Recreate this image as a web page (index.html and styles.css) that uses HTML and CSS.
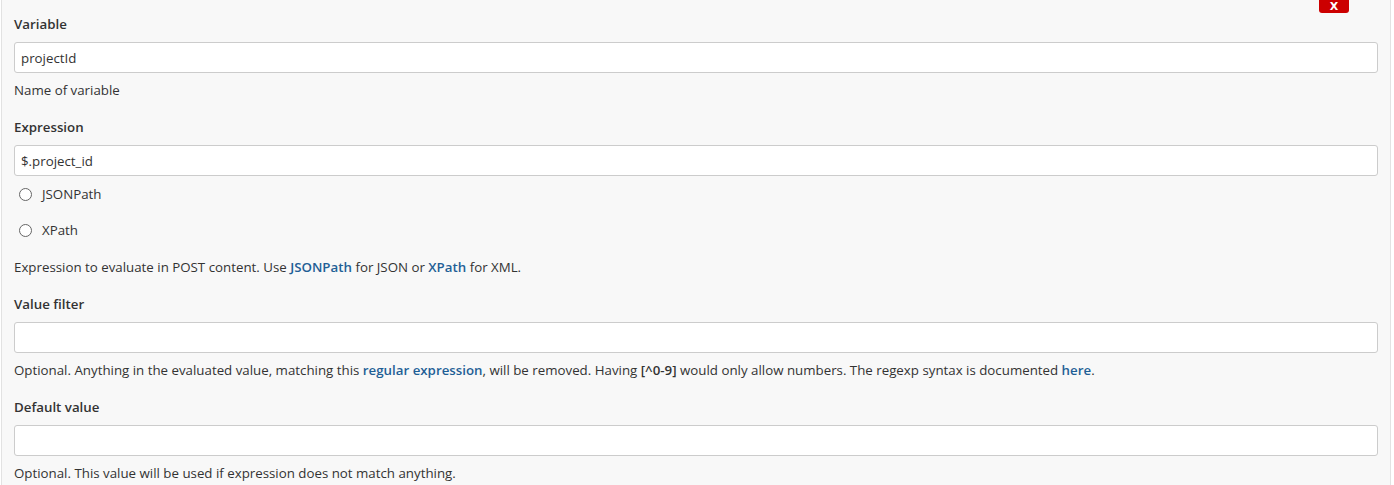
FILE: index.html
```html
<!DOCTYPE html>
<html>
<head>
<meta charset="utf-8">
<link rel="stylesheet" href="styles.css">
</head>
<body>
<div class="panel">
  <div class="toolbar"><button class="close">X</button></div>
  <div class="field">
    <div class="label">Variable</div>
    <input class="text" type="text" value="projectId">
    <div class="help">Name of variable</div>
  </div>
  <div class="field">
    <div class="label">Expression</div>
    <input class="text" type="text" value="$.project_id">
    <label class="radio"><span class="dot"></span>JSONPath</label>
    <label class="radio"><span class="dot"></span>XPath</label>
    <div class="help">Expression to evaluate in POST content. Use <a href="#">JSONPath</a> for JSON or <a href="#">XPath</a> for XML.</div>
  </div>
  <div class="field">
    <div class="label">Value filter</div>
    <input class="text" type="text" value="">
    <div class="help">Optional. Anything in the evaluated value, matching this <a href="#">regular expression</a>, will be removed. Having <b>[^0-9]</b> would only allow numbers. The regexp syntax is documented <a href="#">here</a>.</div>
  </div>
  <div class="field">
    <div class="label">Default value</div>
    <input class="text" type="text" value="">
    <div class="help">Optional. This value will be used if expression does not match anything.</div>
  </div>
</div>
</body>
</html>
```
FILE: styles.css
```css
html, body {
  margin: 0;
  padding: 0;
  background: #ffffff;
}
body {
  font-family: "Segoe UI", "Open Sans", "Noto Sans", sans-serif;
  font-size: 13.3px;
  color: #333333;
}
.panel {
  margin: 0 3px 0 1px;
  border-left: 1px solid #e2e2e2;
  border-right: 1px solid #e2e2e2;
  background: #f8f8f8;
  padding: 15px 12px 4px 12px;
  height: 485px;
  box-sizing: border-box;
  position: relative;
}
.toolbar {
  position: absolute;
  top: 0;
  right: 41px;
}
.close {
  display: block;
  width: 30px;
  height: 13px;
  padding: 0;
  border: none;
  border-radius: 0 0 3px 3px;
  background: #cc0000;
  color: #ffffff;
  font-family: "DejaVu Sans", sans-serif;
  font-weight: bold;
  font-size: 11px;
  line-height: 10px;
  text-align: center;
}
.field + .field {
  margin-top: 19px;
}
.label {
  font-weight: 600;
  line-height: 18px;
  height: 18px;
  margin-bottom: 9px;
}
.field:first-of-type .label {
  margin-bottom: 9px;
}
.text {
  display: block;
  width: 100%;
  box-sizing: border-box;
  height: 31px;
  margin: 0;
  border: 1px solid #cccccc;
  border-radius: 3px;
  background: #ffffff;
  padding: 0 6px;
  font-family: inherit;
  font-size: 13.3px;
  color: #333333;
}
.help {
  line-height: 18px;
  margin-top: 8px;
}
.radio {
  display: flex;
  align-items: center;
  height: 18px;
  margin-top: 9px;
  margin-bottom: 18px;
}
.radio + .radio {
  margin-top: 0;
  margin-bottom: 19px;
}
.radio + .help {
  margin-top: 0;
}
.dot {
  width: 11px;
  height: 11px;
  border: 1px solid #666666;
  border-radius: 50%;
  background: #ffffff;
  margin: 0 10px 0 5px;
}
a {
  color: #1f5f96;
  font-weight: 600;
  text-decoration: none;
}
b {
  font-weight: 600;
}
```
